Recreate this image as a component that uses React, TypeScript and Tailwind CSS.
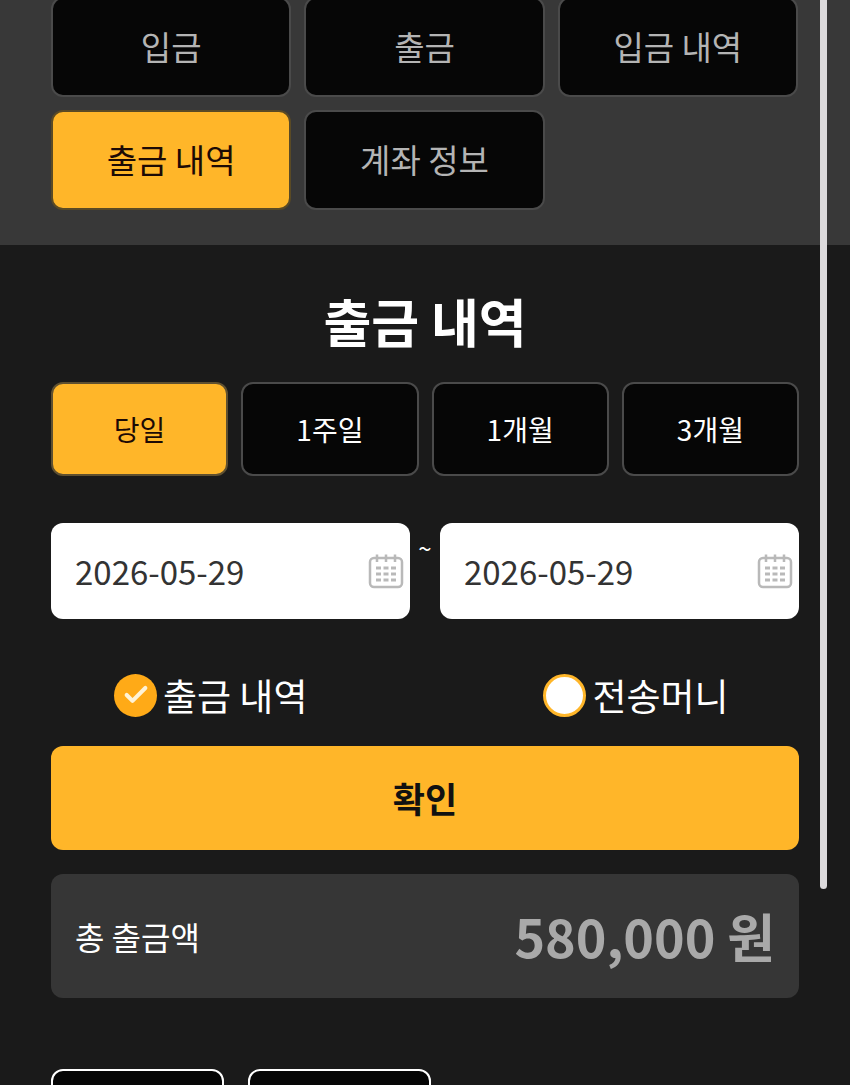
import { Check } from "lucide-react";

const font = { fontFamily: '"Noto Sans CJK KR", "Noto Sans", sans-serif' };

const tabs = ["입금", "출금", "입금 내역", "출금 내역", "계좌 정보"];
const periods = ["당일", "1주일", "1개월", "3개월"];

function CalendarIcon() {
  return (
    <svg width="36" height="36" viewBox="0 0 36 36" fill="none" stroke="#b9b9b9" className="shrink-0">
      <rect x="2" y="5" width="32" height="29" rx="4" strokeWidth="2.5" />
      <path d="M9 1.500V9M18 1.500V9M27 1.500V9" strokeWidth="2.500" />
      <path
        d="M8 15h5M15.500 15h5M23 15h5M8 21h5M15.500 21h5M23 21h5M8 27h5M15.500 27h5M23 27h5"
        strokeWidth="3"
      />
    </svg>
  );
}

function DateInput() {
  return (
    <div className="flex h-[96px] w-[359px] items-center justify-between rounded-[12px] bg-white pl-[24px] pr-[6px]">
      <span className="text-[33px] leading-none text-[#333333]">2026-05-29</span>
      <CalendarIcon />
    </div>
  );
}

export default function App() {
  return (
    <div className="relative h-[1085px] w-[850px] overflow-hidden bg-[#1a1a1a]" style={font}>
      {/* Tabs */}
      <div className="h-[245px] bg-[#383838] pl-[51px] pr-[52px]">
        <div className="grid -translate-y-[3px] grid-cols-3 gap-x-[13px] gap-y-[13px]">
          {tabs.map((tab) => (
            <div
              key={tab}
              className={
                tab === "출금 내역"
                  ? "flex h-[100px] items-center justify-center rounded-[12px] border-2 border-[#5a4a25] bg-[#ffb629] text-[33px] text-[#1c0a05]"
                  : "flex h-[100px] items-center justify-center rounded-[12px] border-2 border-[#4a4a4a] bg-[#060606] text-[33px] text-[#b4b4b4]"
              }
            >
              {tab}
            </div>
          ))}
        </div>
      </div>

      <div className="px-[51px]">
        <h1 className="mt-[40px] text-center text-[52px] font-bold leading-[72px] text-white">출금 내역</h1>

        {/* Period */}
        <div className="mt-[25px] grid grid-cols-4 gap-x-[13px]">
          {periods.map((period, i) => (
            <div
              key={period}
              className={
                i === 0
                  ? "flex h-[94px] items-center justify-center rounded-[12px] border-2 border-[#5f5030] bg-[#ffb629] text-[28px] text-[#1c0a05]"
                  : "flex h-[94px] items-center justify-center rounded-[12px] border-2 border-[#4a4a4a] bg-[#060606] text-[28px] text-white"
              }
            >
              {period}
            </div>
          ))}
        </div>

        {/* Dates */}
        <div className="mt-[47px] flex justify-between">
          <DateInput />
          <span className="-mt-[2px] text-[24px] leading-[54px] text-white">~</span>
          <DateInput />
        </div>

        {/* Radios */}
        <div className="mt-[53px] flex h-[46px] items-center">
          <div className="ml-[63px] flex items-center gap-[6px]">
            <span className="flex h-[43px] w-[43px] items-center justify-center rounded-full bg-[#ffaa17]">
              <Check size={28} strokeWidth={3.5} className="text-[#fff3d6]" />
            </span>
            <span className="text-[37px] leading-none text-white">출금 내역</span>
          </div>
          <div className="ml-[236px] flex items-center gap-[6px]">
            <span className="h-[43px] w-[43px] rounded-full border-[3px] border-[#ffb629] bg-white" />
            <span className="text-[37px] leading-none text-white">전송머니</span>
          </div>
        </div>

        {/* Confirm */}
        <div className="mt-[28px] flex h-[104px] items-center justify-center rounded-[12px] bg-[#ffb629] text-[35px] font-bold text-[#111111]">
          확인
        </div>

        {/* Total */}
        <div className="mt-[24px] flex h-[124px] items-center justify-between rounded-[12px] bg-[#363636] px-[24px]">
          <span className="text-[32px] text-white">총 출금액</span>
          <span className="text-[52px] font-bold text-[#a9a9a9]">580,000 원</span>
        </div>

        {/* Bottom buttons */}
        <div className="mt-[71px] flex gap-[24px]">
          <div className="h-[60px] w-[173px] rounded-[12px] border-2 border-white bg-[#060606]" />
          <div className="h-[60px] w-[183px] rounded-[12px] border-2 border-white bg-[#060606]" />
        </div>
      </div>

      {/* Scrollbar */}
      <div className="absolute right-[23px] top-0 h-[889px] w-[7px] rounded-b-full bg-[#dcdadc]" />
    </div>
  );
}
